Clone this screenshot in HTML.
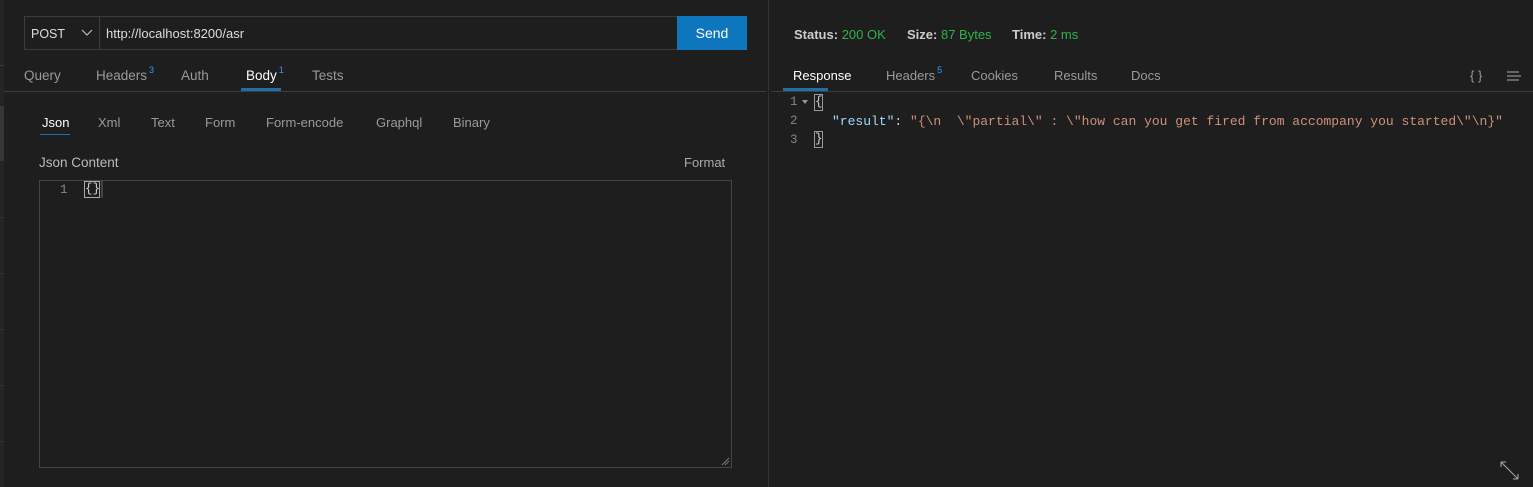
<!DOCTYPE html>
<html><head><style>
*{margin:0;padding:0;box-sizing:border-box}
body{width:1533px;height:487px;background:#1e1e1e;font-family:"Liberation Sans",sans-serif;font-size:13px;color:#ccc;position:relative;overflow:hidden}
.a{position:absolute;white-space:pre}
.t{color:#9a9a9a}
sup{font-size:9px;color:#3794ff;position:relative;top:-3px;margin-left:2px;vertical-align:top}
.mono{font-family:"Liberation Mono","DejaVu Sans Mono",monospace;font-size:12.5px}
</style></head><body>
<div class="a" style="left:0;top:0;width:4px;height:487px;background:#252526"></div>
<div class="a" style="left:0;top:65px;width:4px;height:1px;background:#3a3a3a"></div>
<div class="a" style="left:0;top:106px;width:4px;height:55px;background:#37373a"></div>
<div class="a" style="left:0;top:217px;width:4px;height:1px;background:#333"></div>
<div class="a" style="left:0;top:273px;width:4px;height:1px;background:#333"></div>
<div class="a" style="left:0;top:329px;width:4px;height:1px;background:#333"></div>
<div class="a" style="left:0;top:385px;width:4px;height:1px;background:#333"></div>
<div class="a" style="left:0;top:441px;width:4px;height:1px;background:#333"></div>

<div class="a" style="left:24px;top:16px;width:654px;height:34px;border:1px solid #3c3c3c"></div>
<div class="a" style="left:99px;top:16px;width:1px;height:34px;background:#3c3c3c"></div>
<div class="a" style="left:31px;top:27px;color:#ddd;font-size:12.5px">POST</div>
<svg class="a" style="left:81px;top:29px" width="12" height="8"><path d="M1 1l5 5 5-5" stroke="#bbb" fill="none" stroke-width="1.2"/></svg>
<div class="a" style="left:106px;top:26px;color:#ddd">http://localhost:8200/asr</div>
<div class="a" style="left:677px;top:16px;width:70px;height:34px;background:#0e76bd;color:#fff;text-align:center;line-height:34px;font-size:14px">Send</div>

<div class="a t" style="left:24px;top:68px;font-size:13.5px">Query</div>
<div class="a t" style="left:96px;top:68px;font-size:13.5px">Headers<sup>3</sup></div>
<div class="a t" style="left:181px;top:68px;font-size:13.5px">Auth</div>
<div class="a" style="left:246px;top:68px;font-size:13.5px;color:#fff">Body<sup>1</sup></div>
<div class="a t" style="left:312px;top:68px;font-size:13.5px">Tests</div>
<div class="a" style="left:241px;top:88px;width:40px;height:3px;background:#1f6fa8"></div>
<div class="a" style="left:4px;top:91px;width:762px;height:1px;background:#3c3c3c"></div>

<div class="a" style="left:42px;top:115px;color:#fff">Json</div>
<div class="a" style="left:40px;top:134px;width:30px;height:1px;background:#1f6fa8"></div>
<div class="a t" style="left:98px;top:115px">Xml</div>
<div class="a t" style="left:151px;top:115px">Text</div>
<div class="a t" style="left:205px;top:115px">Form</div>
<div class="a t" style="left:266px;top:115px">Form-encode</div>
<div class="a t" style="left:376px;top:115px">Graphql</div>
<div class="a t" style="left:453px;top:115px">Binary</div>

<div class="a" style="left:39px;top:155px;color:#bbb;font-size:13.5px">Json Content</div>
<div class="a" style="left:684px;top:155px;color:#aaa">Format</div>

<div class="a" style="left:39px;top:180px;width:693px;height:288px;border:1px solid #444"></div>
<div class="a mono" style="left:60px;top:183px;color:#858585">1</div>
<div class="a mono" style="left:84px;top:181px;width:16px;height:17px;border:1px solid #aaa;color:#d4d4d4;text-align:center;line-height:15px">{}</div>
<div class="a" style="left:101px;top:181px;width:2px;height:17px;background:#444"></div>
<svg class="a" style="left:720px;top:456px" width="10" height="10"><path d="M9 2L2 9M9 5L5 9" stroke="#777" stroke-width="1"/></svg>

<div class="a" style="left:768px;top:0;width:1px;height:487px;background:#333"></div>

<div class="a" style="left:794px;top:27px;font-size:13px;color:#ccc"><b>Status:</b> <span style="color:#2fb34a">200 OK</span></div>
<div class="a" style="left:907px;top:27px;font-size:13px"><b>Size:</b> <span style="color:#2fb34a">87 Bytes</span></div>
<div class="a" style="left:1012px;top:27px;font-size:13px"><b>Time:</b> <span style="color:#2fb34a">2 ms</span></div>

<div class="a" style="left:793px;top:68px;color:#fff">Response</div>
<div class="a" style="left:783px;top:88px;width:45px;height:3px;background:#1f6fa8"></div>
<div class="a t" style="left:886px;top:68px">Headers<sup>5</sup></div>
<div class="a t" style="left:971px;top:68px">Cookies</div>
<div class="a t" style="left:1054px;top:68px">Results</div>
<div class="a t" style="left:1131px;top:68px">Docs</div>
<div class="a t" style="left:1470px;top:68px">{ }</div>
<svg class="a" style="left:1507px;top:71px" width="14" height="10"><path d="M0 1h12M0 5h14M0 9h12" stroke="#aaa" stroke-width="1"/></svg>
<div class="a" style="left:771px;top:91px;width:762px;height:1px;background:#3c3c3c"></div>

<div class="a mono" style="left:790px;top:95px;color:#858585">1</div>
<svg class="a" style="left:802px;top:100px" width="6" height="5"><path d="M0 0h6L3 4z" fill="#999"/></svg>
<div class="a mono" style="left:814px;top:94px;width:9px;height:17px;border:1px solid #999;color:#d4d4d4;line-height:15px">{</div>
<div class="a mono" style="left:790px;top:114px;color:#858585">2</div>
<div class="a mono" style="left:832px;top:114px;font-size:13px"><span style="color:#9cdcfe">"result"</span><span style="color:#d4d4d4">: </span><span style="color:#ce9178">"{\n  \"partial\" : \"how can you get fired from accompany you started\"\n}"</span></div>
<div class="a mono" style="left:790px;top:133px;color:#858585">3</div>
<div class="a mono" style="left:814px;top:131px;width:9px;height:17px;border:1px solid #999;color:#d4d4d4;line-height:15px">}</div>

<svg class="a" style="left:1500px;top:461px" width="20" height="20"><path d="M1 1l17 17M1 1h5M1 1v5M18 18h-5M18 18v-5" stroke="#aaa" stroke-width="1" fill="none"/></svg>
</body></html>
